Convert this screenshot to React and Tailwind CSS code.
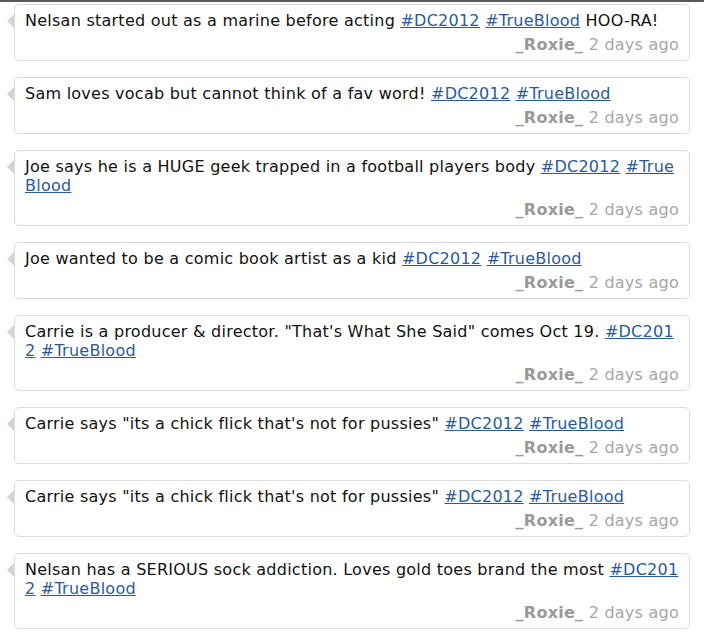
const tweets = [
  { text: "Nelsan started out as a marine before acting", tail: "HOO-RA!" },
  { text: "Sam loves vocab but cannot think of a fav word!" },
  { text: "Joe says he is a HUGE geek trapped in a football players body" },
  { text: "Joe wanted to be a comic book artist as a kid" },
  { text: 'Carrie is a producer & director. "That\'s What She Said" comes Oct 19.' },
  { text: 'Carrie says "its a chick flick that\'s not for pussies"' },
  { text: 'Carrie says "its a chick flick that\'s not for pussies"' },
  { text: "Nelsan has a SERIOUS sock addiction. Loves gold toes brand the most" },
];

function Tweet({ text, tail }) {
  return (
    <div className="relative mx-[14px] rounded-[5px] border border-[#dcdcdc] bg-white px-[10px] pb-[6px] pt-[6px]">
      <span className="absolute left-[-8px] top-[9px] h-0 w-0 border-y-[7px] border-r-[7px] border-y-transparent border-r-[#d4d4d4]" />
      <div className="break-all text-[#111]">
        {text}{" "}
        <a href="#" className="text-[#2a5a99] underline">#DC2012</a>{" "}
        <a href="#" className="text-[#2a5a99] underline">#TrueBlood</a>
        {tail ? " " + tail : null}
      </div>
      <div className="mt-[5px] text-right text-[#a6a6a6]">
        <span className="font-bold text-[#9a9a9a]">_Roxie_</span> 2 days ago
      </div>
    </div>
  );
}

export default function App() {
  return (
    <div className="min-h-[640px] bg-white text-[16px] leading-[19px] tracking-[0.25px]" style={{ fontFamily: '"DejaVu Sans", Verdana, sans-serif' }}>
      <div className="h-[2px] bg-[#5a5a5a]" />
      <div className="flex flex-col gap-[16px] pt-[2px]">
        {tweets.map((t, i) => (
          <Tweet key={i} {...t} />
        ))}
      </div>
    </div>
  );
}
